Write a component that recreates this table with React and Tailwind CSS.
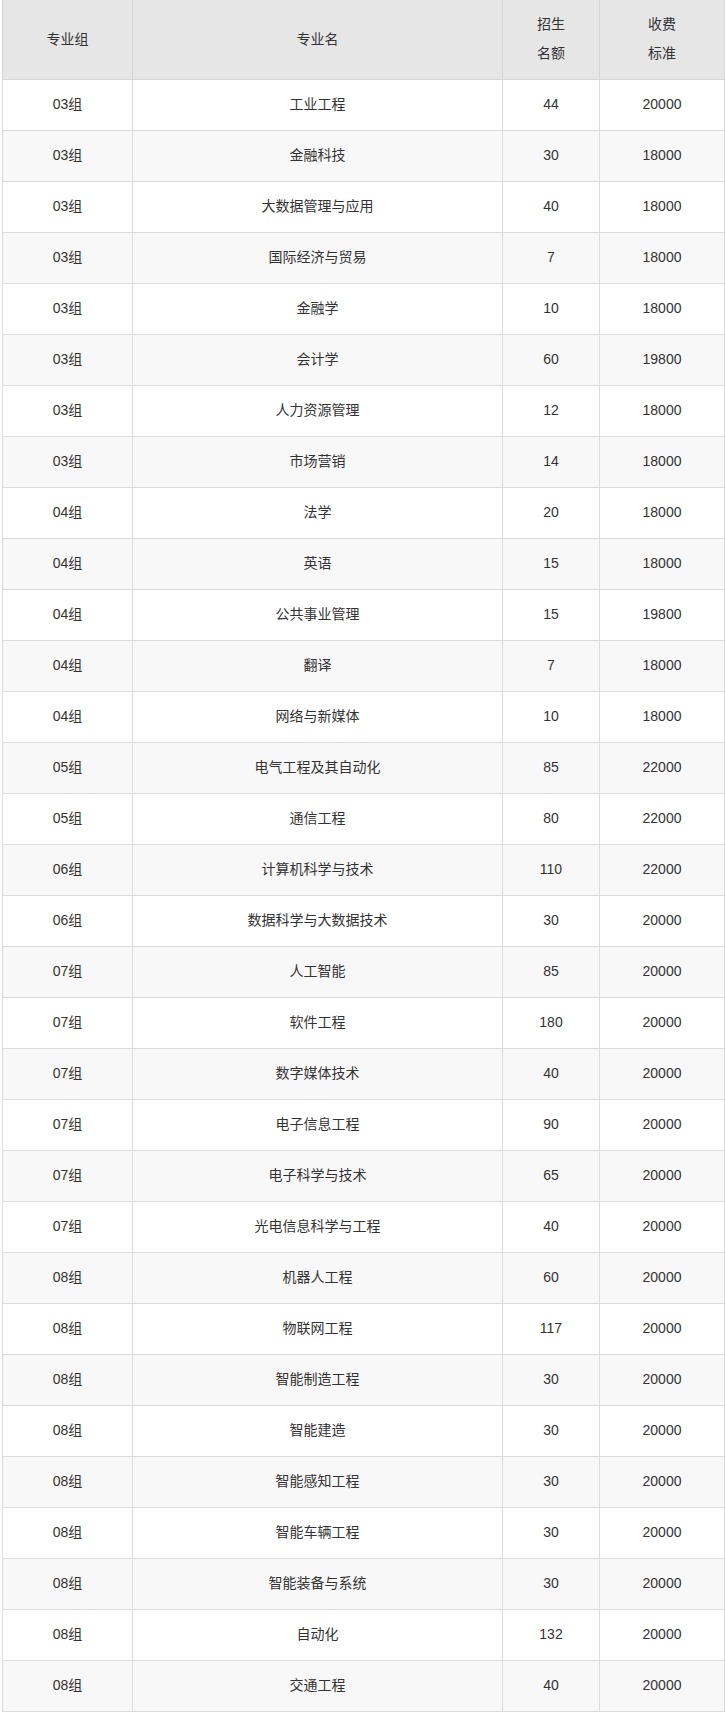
import React from 'react';

const rows = [
    ['03组', '工业工程', '44', '20000'],
    ['03组', '金融科技', '30', '18000'],
    ['03组', '大数据管理与应用', '40', '18000'],
    ['03组', '国际经济与贸易', '7', '18000'],
    ['03组', '金融学', '10', '18000'],
    ['03组', '会计学', '60', '19800'],
    ['03组', '人力资源管理', '12', '18000'],
    ['03组', '市场营销', '14', '18000'],
    ['04组', '法学', '20', '18000'],
    ['04组', '英语', '15', '18000'],
    ['04组', '公共事业管理', '15', '19800'],
    ['04组', '翻译', '7', '18000'],
    ['04组', '网络与新媒体', '10', '18000'],
    ['05组', '电气工程及其自动化', '85', '22000'],
    ['05组', '通信工程', '80', '22000'],
    ['06组', '计算机科学与技术', '110', '22000'],
    ['06组', '数据科学与大数据技术', '30', '20000'],
    ['07组', '人工智能', '85', '20000'],
    ['07组', '软件工程', '180', '20000'],
    ['07组', '数字媒体技术', '40', '20000'],
    ['07组', '电子信息工程', '90', '20000'],
    ['07组', '电子科学与技术', '65', '20000'],
    ['07组', '光电信息科学与工程', '40', '20000'],
    ['08组', '机器人工程', '60', '20000'],
    ['08组', '物联网工程', '117', '20000'],
    ['08组', '智能制造工程', '30', '20000'],
    ['08组', '智能建造', '30', '20000'],
    ['08组', '智能感知工程', '30', '20000'],
    ['08组', '智能车辆工程', '30', '20000'],
    ['08组', '智能装备与系统', '30', '20000'],
    ['08组', '自动化', '132', '20000'],
    ['08组', '交通工程', '40', '20000'],
];

const App = () => {
    return (
        <div className="w-[725px] bg-white pl-[2px] pb-[6px] font-['Liberation_Sans','Noto_Sans_CJK_SC',sans-serif] text-[14px] text-[#333]">
            <table className="w-[722px] table-fixed border-collapse text-center">
                <colgroup>
                    <col className="w-[130px]" />
                    <col className="w-[370px]" />
                    <col className="w-[97px]" />
                    <col className="w-[125px]" />
                </colgroup>
                <thead>
                    <tr className="h-[79px] bg-[#e6e6e6] leading-[29px]">
                        <th className="border border-t-0 border-[#d6d6d6] font-normal">专业组</th>
                        <th className="border border-t-0 border-[#d6d6d6] font-normal">专业名</th>
                        <th className="border border-t-0 border-[#d6d6d6] font-normal">招生<br />名额</th>
                        <th className="border border-t-0 border-[#d6d6d6] font-normal">收费<br />标准</th>
                    </tr>
                </thead>
                <tbody>
                    {rows.map((row, i) => (
                        <tr key={i} className={`h-[51px] ${i % 2 === 1 ? 'bg-[#f8f8f8]' : 'bg-white'}`}>
                            {row.map((cell, j) => (
                                <td key={j} className="border border-[#dcdcdc] p-0">{cell}</td>
                            ))}
                        </tr>
                    ))}
                </tbody>
            </table>
        </div>
    );
};

export default App;
